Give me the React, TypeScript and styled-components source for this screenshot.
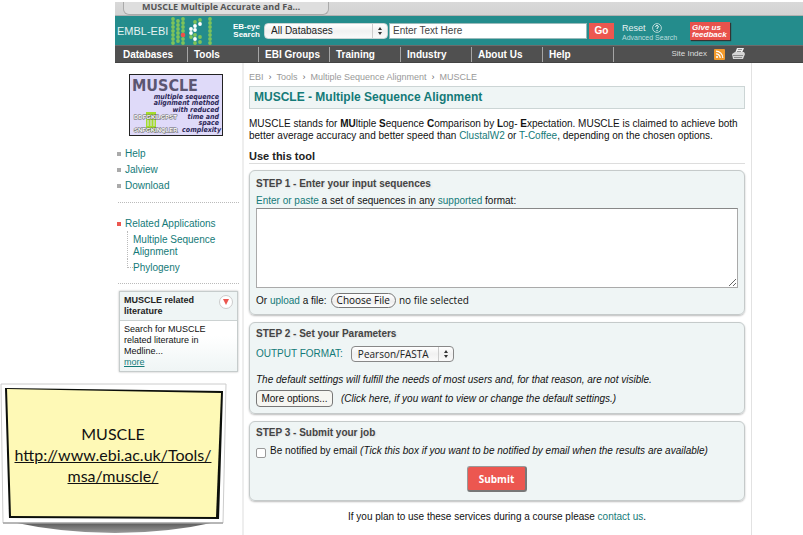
import React from "react";
import styled, { createGlobalStyle } from "styled-components";

const teal = "#147a78";
const bar = "#248c8c";
const red = "#ec5750";
const pale = "#eff5f5";
const lucida = '"Open Sans", "Noto Sans", sans-serif';

const GlobalStyle = createGlobalStyle`
  *, *::before, *::after { box-sizing: border-box; }
  body {
    margin: 0;
    background: #fff;
    color: #111;
    font: 10px/12px "Liberation Sans", Arial, sans-serif;
  }
  a { color: ${teal}; text-decoration: none; }
  ul, ol, p, h1, h2, h3 { margin: 0; padding: 0; font-size: inherit; }
  ul, ol { list-style: none; }
  button, input, select, textarea { font: inherit; color: inherit; }
`;

const Slide = styled.div`
  position: relative;
  padding: 2px 0 0 115px;
`;

const TabStrip = styled.div`
  display: flex;
  height: 14px;
  padding-left: 8px;
  background: linear-gradient(#d9d9d9, #d2d2d2);
  border-bottom: 1px solid #b0b0b0;
`;

const BrowserTab = styled.div`
  width: 206px;
  height: 13px;
  padding-left: 18px;
  background: #dedede;
  border: 1px solid #aaa;
  border-top: 0;
  border-radius: 0 0 6px 6px;
  color: #555;
  font: bold 9px/9px ${lucida};
  white-space: nowrap;
`;

const Masthead = styled.header`
  display: flex;
  align-items: center;
  height: 29px;
  background: ${bar};
  color: #fff;
`;

const Brand = styled.a`
  display: flex;
  align-items: center;
  gap: 3px;
  width: 117px;
  padding-left: 2px;
  color: #e6f2f2;
  font-size: 11px;
  white-space: nowrap;
`;

const SearchForm = styled.form`
  display: flex;
  align-items: center;
  flex: 1;
`;

const EyeLabel = styled.label`
  width: 32px;
  padding-right: 4px;
  font-weight: bold;
  font-size: 8px;
  line-height: 8px;
  text-align: right;
  white-space: nowrap;
`;

const SelectShell = styled.span<{ $wide?: boolean }>`
  position: relative;
  display: inline-flex;
  width: ${(p) => (p.$wide ? 124 : 103)}px;
  height: 16px;
`;

const Select = styled.select<{ $wide?: boolean }>`
  appearance: none;
  width: 100%;
  height: 100%;
  padding: 0 16px 0 6px;
  border: 1px solid ${(p) => (p.$wide ? "#c8d4d4" : "#888")};
  border-radius: 4px;
  background: linear-gradient(90deg, transparent calc(100% - 15px), #ccc calc(100% - 15px), #ccc calc(100% - 14px), transparent calc(100% - 14px)),
    linear-gradient(#fff, #f1f1f1 50%, #fafafa);
  color: #222;
  font: ${(p) => (p.$wide ? '10px "Liberation Sans", Arial, sans-serif' : `10px ${lucida}`)};
`;

const Arrows = styled.svg`
  position: absolute;
  right: 5px;
  top: 4px;
  pointer-events: none;
`;

const QueryInput = styled.input`
  width: 198px;
  height: 16px;
  margin-left: 1px;
  padding: 0 3px;
  border: 1px solid #9bb;
  border-radius: 0;
  background: #fff;
  color: #444;
  &::placeholder { color: #444; opacity: 1; }
`;

const GoButton = styled.button`
  width: 25px;
  height: 16px;
  margin-left: 2px;
  padding: 0;
  border: 0;
  background: ${red};
  color: #fff;
  font-weight: bold;
`;

const SearchExtras = styled.div`
  display: flex;
  flex-direction: column;
  width: 68px;
  margin-left: 8px;
  padding-top: 3px;
`;

const ResetRow = styled.div`
  display: flex;
  align-items: center;
  gap: 6px;
  height: 11px;
`;

const ResetButton = styled.button`
  padding: 0;
  border: 0;
  background: none;
  color: #e4f1f1;
  font-size: 9px;
`;

const AdvancedLink = styled.a`
  color: #b9dddd;
  font-size: 7px;
  line-height: 9px;
  white-space: nowrap;
`;

const Feedback = styled.a`
  width: 40px;
  height: 18px;
  padding: 2px 2px 0;
  background: #e8524c;
  box-shadow: 1px 1px 1px #333;
  color: #fff;
  font: italic bold 8px/7px "Liberation Sans", Arial, sans-serif;
  white-space: nowrap;
`;

const NavBar = styled.nav`
  display: flex;
  align-items: center;
  height: 18px;
  background: #505050;
  border-top: 1px solid #6b6b6b;
  border-bottom: 1px solid #444;
`;

const NavList = styled.ul`
  display: flex;
  padding-left: 2px;
`;

const NavItem = styled.li`
  width: 71px;
  height: 15px;
  padding-left: 6px;
  border-right: 1px solid #a5a5a5;
  line-height: 15px;
  a { color: #fff; font-weight: bold; white-space: nowrap; }
`;

const NavTools = styled.div`
  display: flex;
  align-items: center;
  gap: 7px;
  margin: 0 58px 0 auto;
  a { display: flex; color: #ddd; font-size: 8px; }
`;

const Columns = styled.div`
  display: flex;
  min-height: calc(100vh - 63px);
  margin-right: 51px;
  border-right: 1px solid #e2e2e2;
`;

const Sidebar = styled.aside`
  flex: none;
  width: 129px;
  padding: 11px 3px 0 2px;
  border-right: 2px solid #eee;
`;

const LogoLink = styled.a`
  display: block;
  width: 94px;
  height: 62px;
  margin-left: 12px;
`;

const SideList = styled.ul`
  padding-top: 10px;
`;

const SideItem = styled.li<{ $red?: boolean }>`
  display: flex;
  align-items: center;
  gap: 4px;
  line-height: 16px;
  &::before {
    content: "";
    width: 4px;
    height: 4px;
    background: ${(p) => (p.$red ? red : "#aaa")};
  }
`;

const DottedLine = styled.hr`
  height: 0;
  margin: 8px 0 3px 1px;
  border: 0;
  border-top: 1px dotted #bbb;
`;

const SubTree = styled.ul`
  margin-left: 10px;
`;

const SubItem = styled.li<{ $last?: boolean }>`
  display: grid;
  grid-template-columns: 6px 1fr;
  padding: ${(p) => (p.$last ? "3px 0 1px" : "2px 0 1px")};
  &::before {
    content: "";
    height: ${(p) => (p.$last ? "9px" : "calc(100% + 4px)")};
    margin-top: -3px;
    border-left: 1px dotted #bbb;
    border-bottom: ${(p) => (p.$last ? "1px dotted #bbb" : "0")};
  }
`;

const InfoCard = styled.section`
  width: 119px;
  margin: 7px 0 0 2px;
  border: 1px solid #c6cccc;
  box-shadow: 0 0 2px #bbb;
  font-size: 9px;
  line-height: 11px;
`;

const InfoHead = styled.div`
  display: flex;
  justify-content: space-between;
  padding: 3px 4px;
  border-bottom: 1px solid #ccd2d2;
  background: ${pale};
  color: #222;
`;

const CollapseButton = styled.button`
  width: 14px;
  height: 14px;
  padding: 0;
  border: 1px solid #ccc;
  border-radius: 50%;
  background: #fff;
  display: grid;
  place-items: center;
`;

const InfoBody = styled.p`
  padding: 3px 4px;
  background: linear-gradient(#fff 30%, ${pale});
  a { text-decoration: underline; }
`;

const Main = styled.main`
  flex: 1;
  min-width: 0;
  padding: 8px 6px 0 5px;
`;

const Crumbs = styled.ol`
  display: flex;
  color: #999;
  font-size: 9px;
  a { color: #999; }
  li + li::before { content: "›"; margin: 0 5px; color: #666; }
`;

const PageTitle = styled.h1`
  margin-top: 3px;
  padding: 0 4px;
  border: 1px solid #ccd5d5;
  background: ${pale};
  color: ${teal};
  font-size: 12px;
  line-height: 21px;
`;

const Intro = styled.p`
  margin-top: 9px;
`;

const SectionTitle = styled.h2`
  margin: 8px 0 6px;
  border-bottom: 1px solid #ddd;
  color: #222;
  font-size: 11px;
  line-height: 13px;
`;

const Step = styled.fieldset<{ $roomy?: boolean }>`
  display: block;
  min-width: 0;
  margin: 0 0 7px;
  padding: ${(p) => (p.$roomy ? 6 : 4)}px 6px 6px;
  border: 1px solid #c5caca;
  border-radius: 6px;
  background: ${pale};
  box-shadow: 0 1px 2px #bbb;
`;

const StepTitle = styled.h3`
  color: #444;
  line-height: 14px;
  text-shadow: 1px 1px 2px #ddd;
`;

const FieldLabel = styled.label`
  display: block;
  padding: 4px 0 1px;
`;

const SequenceBox = styled.textarea`
  display: block;
  width: 100%;
  height: 80px;
  border: 1px solid #aaa;
  border-top-color: #888;
  border-radius: 0;
  background: #fff;
`;

const Row = styled.div<{ $top: number; $gap: number }>`
  display: flex;
  align-items: center;
  gap: ${(p) => p.$gap}px;
  margin-top: ${(p) => p.$top}px;
`;

const FilePicker = styled.label`
  display: flex;
  align-items: center;
  gap: 3px;
  font: 10px/13px ${lucida};
`;

const HiddenFile = styled.input`
  position: absolute;
  width: 1px;
  height: 1px;
  opacity: 0;
`;

const FileFace = styled.span`
  padding: 0 5px;
  border: 1px solid #777;
  border-radius: 8px;
  background: linear-gradient(#fff, #eee 60%, #fff);
`;

const MoreButton = styled.button`
  width: 77px;
  height: 17px;
  padding: 0;
  border: 1px solid #777;
  border-radius: 4px;
  background: #f6f6f2;
`;

const Tick = styled.input`
  appearance: none;
  width: 10px;
  height: 10px;
  margin: 4px 0 0;
  border: 1px solid #999;
  border-radius: 2px;
  background: #fff;
`;

const SubmitButton = styled.button`
  display: block;
  width: 60px;
  height: 26px;
  margin: 8px auto 2px;
  padding: 0;
  border: 1px solid #999;
  border-right: 2px solid #777;
  border-bottom: 2px solid #777;
  border-radius: 3px;
  background: ${red};
  color: #fff;
  font: bold 10px ${lucida};
`;

const CourseNote = styled.p`
  padding-top: 3px;
  text-align: center;
`;

const StickyNote = styled.div`
  position: absolute;
  left: 0;
  top: 382px;
  width: 228px;
  height: 153px;
`;

const StickyText = styled.p`
  position: absolute;
  inset: 41px 2px 0 0;
  color: #111;
  font: 16px/21px Lato, "Gill Sans", sans-serif;
  text-align: center;
  a { color: #111; text-decoration: underline; }
`;

const green = "#7fc35a";
const dots: [number, number, string][] = [
  [29, 3, green], [24, 5, green], [29, 7, "#fff"], [24, 9, "#fff"], [20, 12, "#fff"],
  [24, 13, "#fff"], [20, 16, "#fff"], [24, 18, green], [20, 20, green], [24, 22, "#fff"],
  [29, 20, green], [29, 25, green], [24, 26, green],
];
[0, 1, 2, 3, 4, 5, 6].forEach((r) => {
  dots.push([2, 2 + r * 4, green], [12, 2 + r * 4, green], [39, 2 + r * 4, green]);
  if (r < 6) dots.push([7, 4 + r * 4, green]);
});

function HelixLogo() {
  return (
    <svg width="42" height="28" viewBox="0 0 42 28" aria-hidden="true">
      {dots.map(([x, y, c], i) => (
        <circle key={i} cx={x} cy={y} r="1.9" fill={c} />
      ))}
      <circle cx="12" cy="18" r="2.3" fill="#f0504a" />
    </svg>
  );
}

function UpDown() {
  return (
    <Arrows width="6" height="8" viewBox="0 0 6 8" aria-hidden="true">
      <path d="M3 0 5 3H1zM3 8 1 5h4z" fill="#333" />
    </Arrows>
  );
}

function MuscleLogo() {
  return (
    <svg width="94" height="62" viewBox="0 0 94 62" role="img" aria-label="MUSCLE">
      <rect x="0.5" y="0.5" width="93" height="61" fill="#dfdaf9" stroke="#222" />
      <text x="3" y="17" fontFamily="DejaVu Sans Condensed, DejaVu Sans" fontWeight="bold" fontSize="16" fill="#5b5672">MUSCLE</text>
      <path d="M17 38h10v20H17z" fill="#a4dd2c" />
      <path d="M19 46v6M22 46v6M25 46v6" stroke="#dfdaf9" />
      <g fontFamily="DejaVu Sans Condensed, DejaVu Sans" fontWeight="bold" fontStyle="italic" fontSize="7" fill="#2b2757" textAnchor="end">
        <text x="90" y="25">multiple sequence</text>
        <text x="90" y="31">alignment method</text>
        <text x="90" y="38">with reduced</text>
        <text x="90" y="45">time and</text>
        <text x="90" y="51">space</text>
        <text x="92" y="58">complexity</text>
      </g>
      <g fontFamily="Liberation Sans" fontWeight="bold" fontSize="6" fill="#fff" stroke="#666" strokeWidth="1" paintOrder="stroke">
        <text x="5" y="45">DDFGKILGPST</text>
        <text x="5" y="58">SNFGKINQLER</text>
      </g>
    </svg>
  );
}

function NoteFrame() {
  return (
    <svg width="228" height="153" viewBox="0 0 228 153" aria-hidden="true">
      <defs>
        <linearGradient id="shade" x1="0" y1="0" x2="0" y2="1">
          <stop offset="0" stopColor="#555" />
          <stop offset="1" stopColor="#9a9a9a" />
        </linearGradient>
      </defs>
      <path d="M12 140Q62 151 115 151T216 140z" fill="url(#shade)" />
      <path d="M1 2H226L223 141H3z" fill="#fff" stroke="#ccc" />
      <path d="M3 141H223" stroke="#888" />
      <path d="M5 6 223 9 219 137 9 136z" fill="#0c0f0a" />
      <path d="M7 7 221 11 216 135 11 134z" fill="#fef9b6" />
    </svg>
  );
}

const navLinks = ["Databases", "Tools", "EBI Groups", "Training", "Industry", "About Us", "Help"];

export default function App() {
  return (
    <>
      <GlobalStyle />
      <Slide>
        <TabStrip>
          <BrowserTab>MUSCLE Multiple Accurate and Fa…</BrowserTab>
        </TabStrip>
        <Masthead>
          <Brand href="#">
            EMBL-EBI
            <HelixLogo />
          </Brand>
          <SearchForm onSubmit={(e) => e.preventDefault()}>
            <EyeLabel htmlFor="db">EB-eye<br />Search</EyeLabel>
            <SelectShell $wide>
              <Select $wide id="db">
                <option>All Databases</option>
              </Select>
              <UpDown />
            </SelectShell>
            <QueryInput aria-label="Search text" placeholder="Enter Text Here" />
            <GoButton>Go</GoButton>
            <SearchExtras>
              <ResetRow>
                <ResetButton type="reset">Reset</ResetButton>
                <svg width="10" height="10" viewBox="0 0 10 10" aria-hidden="true">
                  <circle cx="5" cy="5" r="4.4" fill="none" stroke="#d5e9e9" strokeWidth="0.8" />
                  <path d="M3.6 3.8Q3.8 2.5 5 2.5T6.4 3.8Q6.4 4.6 5 5.3V6M5 7v1" fill="none" stroke="#fff" />
                </svg>
              </ResetRow>
              <AdvancedLink href="#">Advanced Search</AdvancedLink>
            </SearchExtras>
            <Feedback href="#">Give us<br />feedback</Feedback>
          </SearchForm>
        </Masthead>
        <NavBar>
          <NavList>
            {navLinks.map((t) => (
              <NavItem key={t}><a href="#">{t}</a></NavItem>
            ))}
          </NavList>
          <NavTools>
            <a href="#">Site Index</a>
            <a href="#" aria-label="RSS">
              <svg width="11" height="11" viewBox="0 0 11 11">
                <rect width="11" height="11" rx="1" fill="#f39a2b" />
                <circle cx="3" cy="8" r="1.1" fill="#fff" />
                <path d="M2 4.8a4.2 4.2 0 0 1 4.2 4.2M2 2.2A6.8 6.8 0 0 1 8.8 9" fill="none" stroke="#fff" strokeWidth="1.2" />
              </svg>
            </a>
            <a href="#" aria-label="Print">
              <svg width="13" height="12" viewBox="0 0 13 12">
                <path d="M5 0h7L10 5H3z" fill="#eee" />
                <path d="M0 6 3 4h9l1 2-2 5H1z" fill="#d5d5d5" />
                <path d="M1 7.500h10M2 9.500h8M6 1.500h4M5 3.500h4" stroke="#777" strokeWidth="0.8" />
              </svg>
            </a>
          </NavTools>
        </NavBar>
        <Columns>
          <Sidebar>
            <LogoLink href="#"><MuscleLogo /></LogoLink>
            <SideList>
              <SideItem><a href="#">Help</a></SideItem>
              <SideItem><a href="#">Jalview</a></SideItem>
              <SideItem><a href="#">Download</a></SideItem>
            </SideList>
            <DottedLine />
            <SideList>
              <SideItem $red><a href="#">Related Applications</a></SideItem>
            </SideList>
            <SubTree>
              <SubItem><a href="#">Multiple Sequence Alignment</a></SubItem>
              <SubItem $last><a href="#">Phylogeny</a></SubItem>
            </SubTree>
            <DottedLine />
            <InfoCard>
              <InfoHead>
                <h3>MUSCLE related<br />literature</h3>
                <CollapseButton aria-label="Collapse">
                  <svg width="6" height="6" viewBox="0 0 6 6"><path d="M0 0h6L3 6z" fill={red} /></svg>
                </CollapseButton>
              </InfoHead>
              <InfoBody>
                Search for MUSCLE related literature in Medline...<br />
                <a href="#">more</a>
              </InfoBody>
            </InfoCard>
          </Sidebar>
          <Main>
            <Crumbs>
              <li><a href="#">EBI</a></li>
              <li><a href="#">Tools</a></li>
              <li><a href="#">Multiple Sequence Alignment</a></li>
              <li>MUSCLE</li>
            </Crumbs>
            <PageTitle>MUSCLE - Multiple Sequence Alignment</PageTitle>
            <Intro>
              MUSCLE stands for <b>MU</b>ltiple <b>S</b>equence <b>C</b>omparison by <b>L</b>og- <b>E</b>xpectation.
              MUSCLE is claimed to achieve both better average accuracy and better speed than{" "}
              <a href="#">ClustalW2</a> or <a href="#">T-Coffee</a>, depending on the chosen options.
            </Intro>
            <SectionTitle>Use this tool</SectionTitle>
            <form onSubmit={(e) => e.preventDefault()}>
              <Step $roomy>
                <StepTitle>STEP 1 - Enter your input sequences</StepTitle>
                <FieldLabel htmlFor="seq">
                  <a href="#">Enter or paste</a> a set of sequences in any <a href="#">supported</a> format:
                </FieldLabel>
                <SequenceBox id="seq" />
                <Row $top={5} $gap={4}>
                  <span>Or <a href="#">upload</a> a file:</span>
                  <FilePicker>
                    <HiddenFile type="file" />
                    <FileFace>Choose File</FileFace>
                    no file selected
                  </FilePicker>
                </Row>
              </Step>
              <Step>
                <StepTitle>STEP 2 - Set your Parameters</StepTitle>
                <Row $top={5} $gap={8}>
                  <label htmlFor="fmt"><a href="#">OUTPUT FORMAT:</a></label>
                  <SelectShell>
                    <Select id="fmt"><option>Pearson/FASTA</option></Select>
                    <UpDown />
                  </SelectShell>
                </Row>
                <Row $top={12} $gap={0}>
                  <i>The default settings will fulfill the needs of most users and, for that reason, are not visible.</i>
                </Row>
                <Row $top={4} $gap={8}>
                  <MoreButton type="button">More options...</MoreButton>
                  <i>(Click here, if you want to view or change the default settings.)</i>
                </Row>
              </Step>
              <Step>
                <StepTitle>STEP 3 - Submit your job</StepTitle>
                <Row $top={4} $gap={4}>
                  <Tick type="checkbox" id="mail" />
                  <label htmlFor="mail">
                    Be notified by email <i>(Tick this box if you want to be notified by email when the results are available)</i>
                  </label>
                </Row>
                <SubmitButton>Submit</SubmitButton>
              </Step>
            </form>
            <CourseNote>
              If you plan to use these services during a course please <a href="#">contact us</a>.
            </CourseNote>
          </Main>
        </Columns>
        <StickyNote>
          <NoteFrame />
          <StickyText>
            MUSCLE<br />
            <a href="#">http://www.ebi.ac.uk/Tools/<br />msa/muscle/</a>
          </StickyText>
        </StickyNote>
      </Slide>
    </>
  );
}
